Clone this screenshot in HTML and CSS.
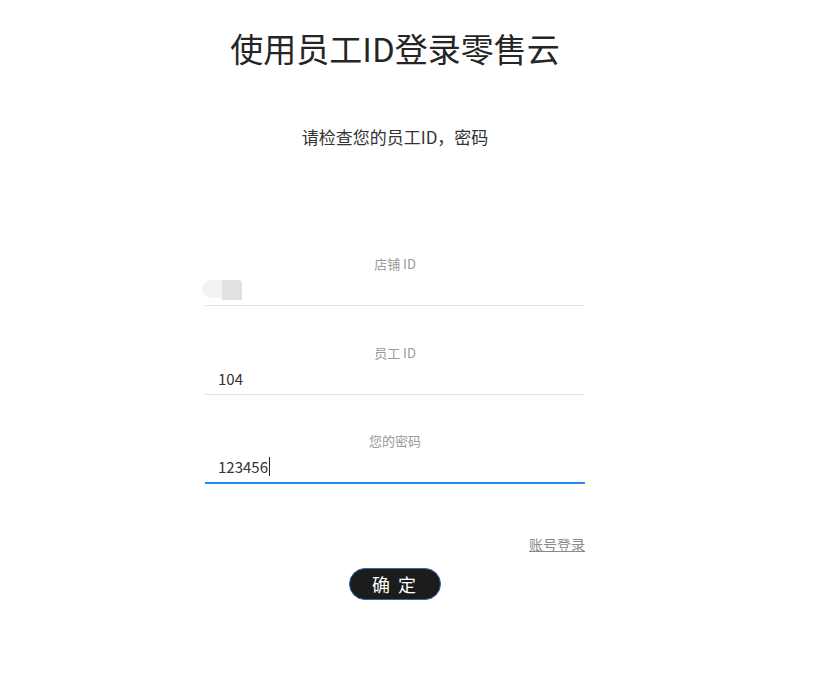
FILE: index.html
```html
<!DOCTYPE html>
<html lang="zh-CN">
<head>
<meta charset="utf-8">
<title>使用员工ID登录零售云</title>
<link rel="stylesheet" href="styles.css">
</head>
<body>
<main class="login">
  <h1 class="title">使用员工ID登录零售云</h1>
  <p class="hint">请检查您的员工ID，密码</p>
  <form class="form">
    <div class="field field-first">
      <label class="label">店铺 ID</label>
      <div class="input">
        <span class="autofill"><span class="af-a"></span><span class="af-b"></span></span>
      </div>
    </div>
    <div class="field">
      <label class="label">员工 ID</label>
      <div class="input"><span class="value">104</span></div>
    </div>
    <div class="field field-last">
      <label class="label">您的密码</label>
      <div class="input input-focus"><span class="value">123456</span><span class="caret"></span></div>
    </div>
    <div class="links"><a class="link" href="#">账号登录</a></div>
    <div class="actions"><button type="button" class="btn">确 定</button></div>
  </form>
</main>
</body>
</html>
```
FILE: styles.css
```css
html, body {
  margin: 0;
  padding: 0;
  background: #ffffff;
}
body {
  font-family: "Noto Sans CJK SC", "Noto Sans", sans-serif;
  color: #333333;
}
.login {
  width: 380px;
  margin-left: 205px;
  display: flex;
  flex-direction: column;
}
.title {
  margin: 24px 0 0;
  font-size: 33px;
  font-weight: 400;
  line-height: 48px;
  text-align: center;
  color: #252525;
}
.hint {
  margin: 53px 0 0;
  font-size: 17px;
  line-height: 24px;
  text-align: center;
  color: #333333;
}
.form {
  display: flex;
  flex-direction: column;
  margin-top: 105px;
}
.field {
  display: flex;
  flex-direction: column;
  margin-top: 37px;
}
.field-first {
  margin-top: 0;
}
.field-last {
  margin-top: 36px;
}
.label {
  font-size: 13px;
  line-height: 20px;
  color: #999999;
  text-align: center;
}
.input {
  height: 31px;
  border-bottom: 1px solid #e3e3e3;
  display: flex;
  align-items: center;
  padding-left: 13px;
  position: relative;
}
.input-focus {
  border-bottom: 2px solid #1e8cf5;
}
.value {
  font-size: 15px;
  color: #333333;
  line-height: 20px;
}
.caret {
  width: 1px;
  height: 19px;
  background: #222222;
  margin-left: 1px;
}
.autofill {
  position: absolute;
  left: -3px;
  top: 6px;
  display: flex;
  align-items: flex-start;
}
.af-a {
  width: 20px;
  height: 18px;
  border-radius: 9px 0 0 9px;
  background: #f3f3f2;
}
.af-b {
  width: 20px;
  height: 20px;
  background: #e0e1e3;
  border-radius: 0 4px 0 0;
}
.links {
  display: flex;
  justify-content: flex-end;
  margin-top: 50px;
}
.link {
  font-size: 14px;
  line-height: 20px;
  color: #8a8a8a;
  text-decoration: underline;
}
.actions {
  display: flex;
  justify-content: center;
  margin-top: 14px;
}
.btn {
  width: 92px;
  height: 32px;
  border-radius: 16px;
  border: 1px solid #2b6cb0;
  background: #1c1c1c;
  color: #ffffff;
  font-family: "Noto Sans CJK SC", sans-serif;
  font-size: 18px;
  letter-spacing: 2px;
  padding: 0;
  cursor: pointer;
}
```
